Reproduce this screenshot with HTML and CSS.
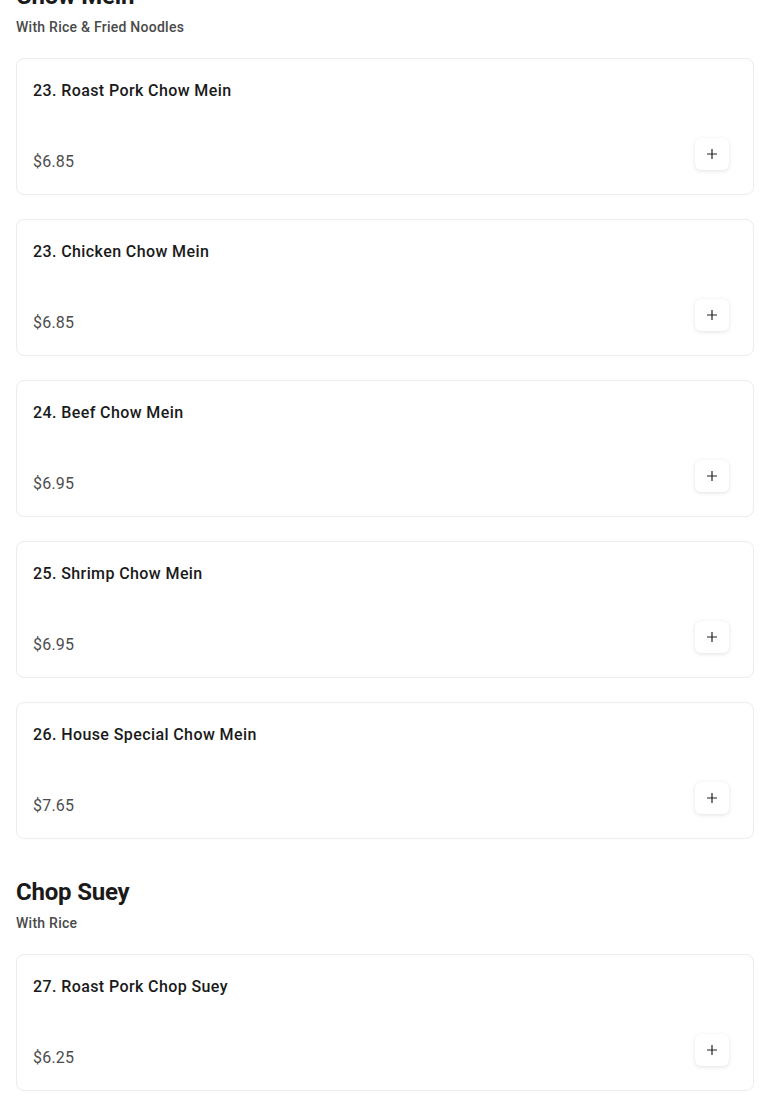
FILE: index.html
```html
<!DOCTYPE html>
<html lang="en">

<head>
    <meta charset="UTF-8">
    <meta name="viewport" content="width=device-width, initial-scale=1.0">
    <title>Menu</title>
    <link rel="stylesheet" href="styles.css">
</head>

<body>
    <div class="menu">
        <section class="category">
            <h2 class="category-title">Chow Mein</h2>
            <p class="category-desc">With Rice &amp; Fried Noodles</p>
            <div class="items">
                <div class="item">
                    <h3 class="item-name">23. Roast Pork Chow Mein</h3>
                    <div class="item-foot">
                        <span class="item-price">$6.85</span>
                        <button class="add-btn" aria-label="Add">
                            <svg viewBox="0 0 12 12" width="12" height="12"><path d="M6 1v10M1 6h10" /></svg>
                        </button>
                    </div>
                </div>
                <div class="item">
                    <h3 class="item-name">23. Chicken Chow Mein</h3>
                    <div class="item-foot">
                        <span class="item-price">$6.85</span>
                        <button class="add-btn" aria-label="Add">
                            <svg viewBox="0 0 12 12" width="12" height="12"><path d="M6 1v10M1 6h10" /></svg>
                        </button>
                    </div>
                </div>
                <div class="item">
                    <h3 class="item-name">24. Beef Chow Mein</h3>
                    <div class="item-foot">
                        <span class="item-price">$6.95</span>
                        <button class="add-btn" aria-label="Add">
                            <svg viewBox="0 0 12 12" width="12" height="12"><path d="M6 1v10M1 6h10" /></svg>
                        </button>
                    </div>
                </div>
                <div class="item">
                    <h3 class="item-name">25. Shrimp Chow Mein</h3>
                    <div class="item-foot">
                        <span class="item-price">$6.95</span>
                        <button class="add-btn" aria-label="Add">
                            <svg viewBox="0 0 12 12" width="12" height="12"><path d="M6 1v10M1 6h10" /></svg>
                        </button>
                    </div>
                </div>
                <div class="item">
                    <h3 class="item-name">26. House Special Chow Mein</h3>
                    <div class="item-foot">
                        <span class="item-price">$7.65</span>
                        <button class="add-btn" aria-label="Add">
                            <svg viewBox="0 0 12 12" width="12" height="12"><path d="M6 1v10M1 6h10" /></svg>
                        </button>
                    </div>
                </div>
            </div>
        </section>

        <section class="category">
            <h2 class="category-title">Chop Suey</h2>
            <p class="category-desc">With Rice</p>
            <div class="items">
                <div class="item">
                    <h3 class="item-name">27. Roast Pork Chop Suey</h3>
                    <div class="item-foot">
                        <span class="item-price">$6.25</span>
                        <button class="add-btn" aria-label="Add">
                            <svg viewBox="0 0 12 12" width="12" height="12"><path d="M6 1v10M1 6h10" /></svg>
                        </button>
                    </div>
                </div>
            </div>
        </section>
    </div>
</body>

</html>
```

FILE: styles.css
```css
* {
    margin: 0;
    padding: 0;
    box-sizing: border-box;
}

body {
    font-family: Roboto, "Liberation Sans", sans-serif;
    color: #1a1a1a;
    background: #fff;
}

/* the page is shown scrolled, so the first heading is cut off */
.menu {
    margin-top: -20px;
    padding: 0 16px;
    display: flex;
    flex-direction: column;
    gap: 37px;
}

/* category header */
.category-title {
    font-size: 24px;
    line-height: 32px;
    font-weight: 700;
    letter-spacing: -0.2px;
}

.category-desc {
    margin-top: 5px;
    font-size: 14px;
    line-height: 20px;
    font-weight: 500;
    letter-spacing: 0.25px;
    color: #4a4a4a;
}

/* item cards */
.items {
    margin-top: 21px;
    display: flex;
    flex-direction: column;
    gap: 24px;
}

.item {
    border: 1px solid #ececec;
    border-radius: 8px;
    padding: 20px 24px 24px 16px;
}

.item-name {
    font-size: 16px;
    line-height: 24px;
    font-weight: 500;
    letter-spacing: 0.4px;
    color: #1a1a1a;
}

.item-foot {
    height: 32px;
    margin-top: 35px;
    display: flex;
    justify-content: space-between;
    align-items: flex-start;
}

.item-price {
    margin-top: 12px;
    font-size: 16px;
    line-height: 24px;
    letter-spacing: 0.2px;
    color: #4d4d4d;
}

.add-btn {
    width: 34px;
    height: 32px;
    border: none;
    border-radius: 6px;
    background: #fff;
    box-shadow: 0 1px 4px rgba(0, 0, 0, 0.12);
    display: flex;
    justify-content: center;
    align-items: center;
    cursor: pointer;
}

.add-btn svg {
    stroke: #222;
    stroke-width: 1.2;
    fill: none;
}
```
